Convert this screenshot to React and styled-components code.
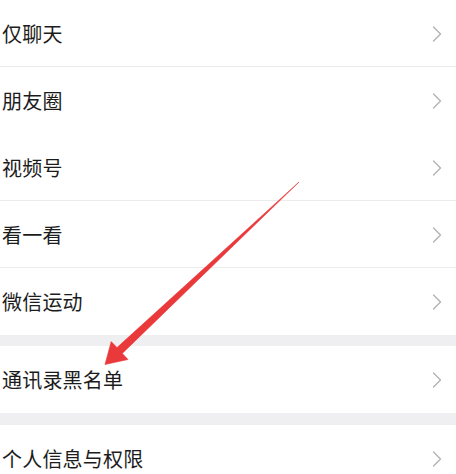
import React from "react";
import styled, { createGlobalStyle } from "styled-components";

const Global = createGlobalStyle`
  html, body { margin: 0; padding: 0; background: #ffffff; }
  body { font-family: "Noto Sans CJK SC", "Noto Sans", sans-serif; overflow: hidden; }
`;

const Page = styled.div`
  position: relative;
  width: 456px;
  height: 474px;
  overflow: hidden;
  background: #ffffff;
`;

const Group = styled.div`
  display: flex;
  flex-direction: column;
  background: #ffffff;
`;

const Band = styled.div`
  height: ${(p) => p.$h}px;
  background: #efeff1;
`;

const Row = styled.div`
  box-sizing: border-box;
  height: 67px;
  display: flex;
  align-items: center;
  justify-content: space-between;
  padding: 1px 14px 0 2px;
  border-bottom: 1px solid ${(p) => (p.$divider ? "#ececec" : "transparent")};
`;

const Label = styled.span`
  font-size: 20px;
  line-height: 1;
  color: #1c1c1c;
  letter-spacing: 0.2px;
`;

const Chevron = styled.svg`
  width: 10px;
  height: 16px;
  flex: none;
`;

const Overlay = styled.svg`
  position: absolute;
  left: 0;
  top: 0;
  pointer-events: none;
`;

const ChevronIcon = () => (
  <Chevron viewBox="0 0 10 16">
    <polyline points="1.5,1 8.5,8 1.5,15" fill="none" stroke="#b3b3b3" strokeWidth="1.4" strokeLinecap="round" strokeLinejoin="round" />
  </Chevron>
);

const groups = [
  { items: [["仅聊天", true], ["朋友圈", false], ["视频号", true], ["看一看", true], ["微信运动", false]], band: 11 },
  { items: [["通讯录黑名单", false]], band: 12 },
  { items: [["个人信息与权限", false]] },
];

export default function App() {
  return (
    <>
      <Global />
      <Page>
        {groups.map((g, gi) => (
          <React.Fragment key={gi}>
            <Group>
              {g.items.map(([t, d]) => (
                <Row key={t} $divider={d}>
                  <Label>{t}</Label>
                  <ChevronIcon />
                </Row>
              ))}
            </Group>
            {g.band ? <Band $h={g.band} /> : null}
          </React.Fragment>
        ))}
        <Overlay width="456" height="474" viewBox="0 0 456 474">
          <polygon
            points="299,182 122.3,353.4 128,359.5 105,364.5 111.2,341.6 117,347.6"
            fill="#e9393a"
            stroke="#e9393a"
            strokeWidth="0.6"
            strokeLinejoin="round"
          />
        </Overlay>
      </Page>
    </>
  );
}
